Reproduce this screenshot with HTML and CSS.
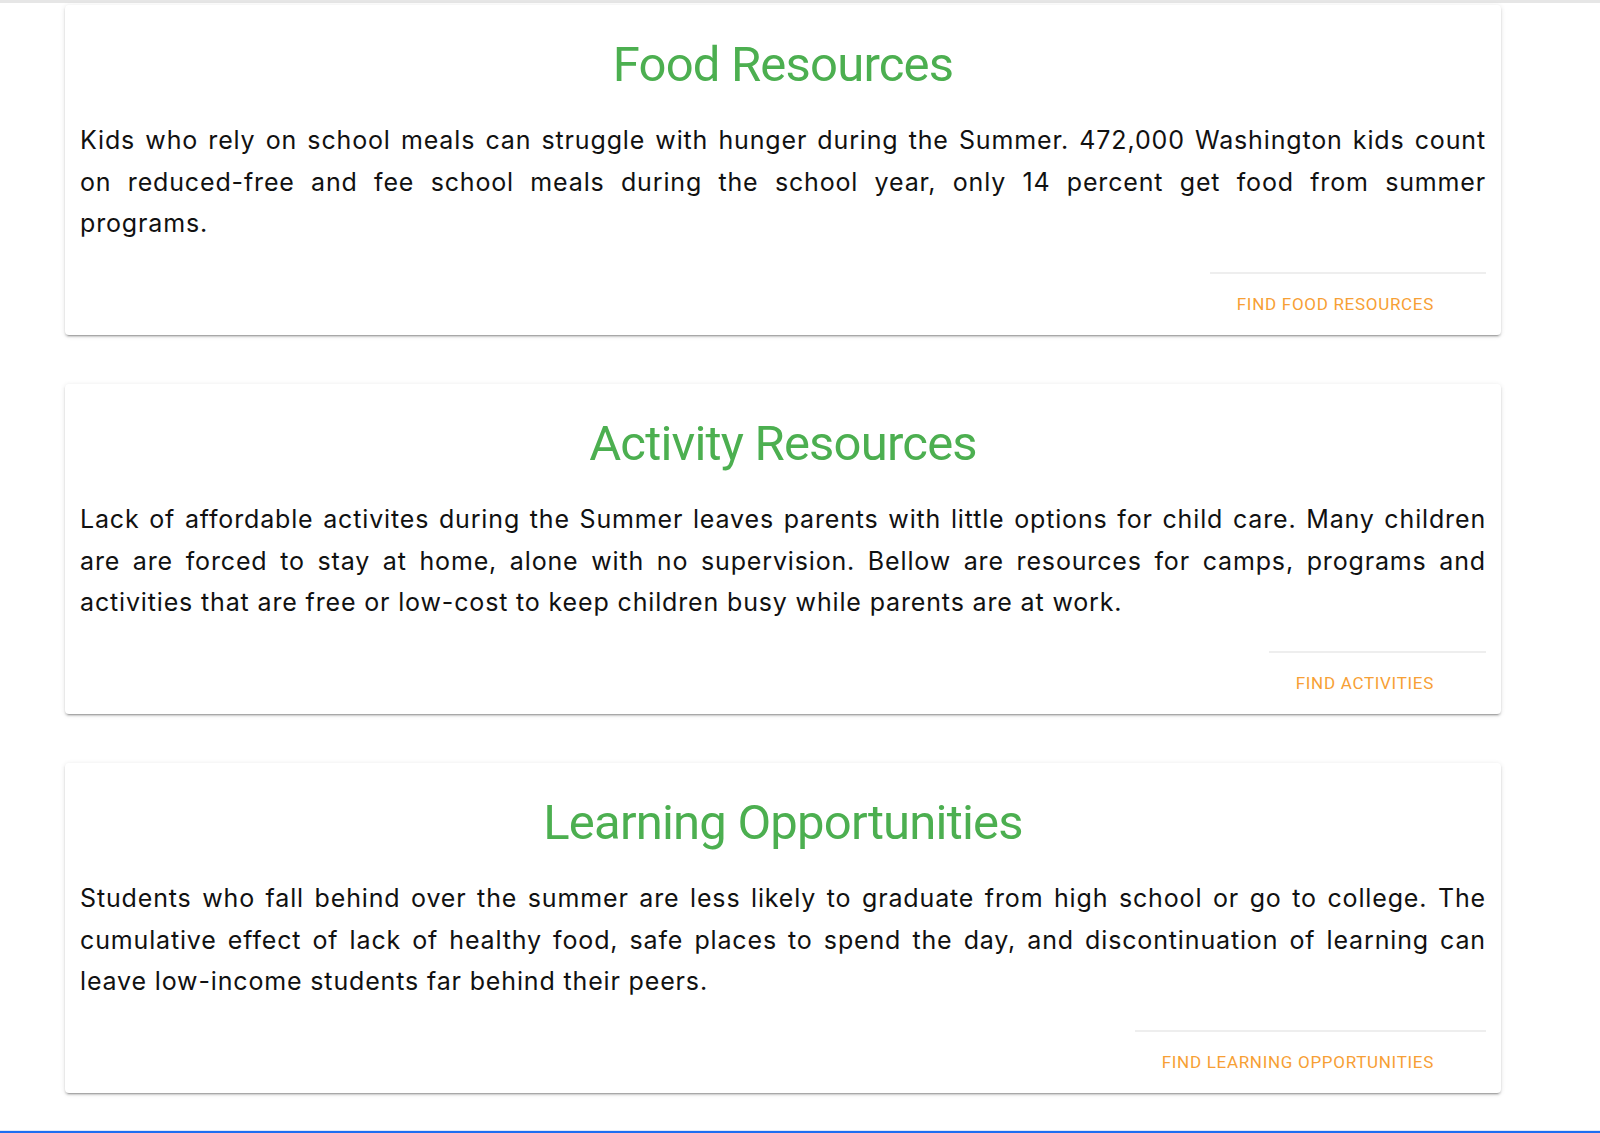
FILE: index.html
```html
<!DOCTYPE html>
<html lang="en">
<head>
<meta charset="utf-8">
<title>Summer Resources</title>
<link rel="stylesheet" href="styles.css">
</head>
<body>
<div class="page">
  <div class="topbar"></div>
  <main class="cards">
    <section class="card">
      <h2 class="card-title">Food Resources</h2>
      <p class="card-text">Kids who rely on school meals can struggle with hunger during the Summer. 472,000 Washington kids count on reduced-free and fee school meals during the school year, only 14 percent get food from summer programs.</p>
      <div class="actions">
        <div class="action"><a class="btn" href="#">Find Food Resources</a></div>
      </div>
    </section>
    <section class="card">
      <h2 class="card-title">Activity Resources</h2>
      <p class="card-text">Lack of affordable activites during the Summer leaves parents with little options for child care. Many children are are forced to stay at home, alone with no supervision. Bellow are resources for camps, programs and activities that are free or low-cost to keep children busy while parents are at work.</p>
      <div class="actions">
        <div class="action"><a class="btn" href="#">Find Activities</a></div>
      </div>
    </section>
    <section class="card">
      <h2 class="card-title">Learning Opportunities</h2>
      <p class="card-text">Students who fall behind over the summer are less likely to graduate from high school or go to college. The cumulative effect of lack of healthy food, safe places to spend the day, and discontinuation of learning can leave low-income students far behind their peers.</p>
      <div class="actions">
        <div class="action"><a class="btn" href="#">Find Learning Opportunities</a></div>
      </div>
    </section>
  </main>
  <div class="bottombar"></div>
</div>
</body>
</html>
```

FILE: styles.css
```css
html, body {
  margin: 0;
  padding: 0;
  background: #ffffff;
}

.page {
  height: 1133px;
  overflow: hidden;
  display: flex;
  flex-direction: column;
}

.topbar {
  height: 3px;
  background: #e6e6e6;
  flex: none;
}

.cards {
  display: flex;
  flex-direction: column;
  gap: 49px;
  padding: 2px 0 0 65px;
}

.card {
  width: 1436px;
  box-sizing: border-box;
  padding: 30px 15px 0 15px;
  background: #fff;
  border-radius: 4px;
  box-shadow: 0 3px 1px -2px rgba(0,0,0,0.2), 0 2px 2px 0 rgba(0,0,0,0.14), 0 1px 5px 0 rgba(0,0,0,0.12);
}

.card-title {
  margin: 0 0 25px 0;
  font-family: Roboto, "Liberation Sans", sans-serif;
  font-weight: 400;
  font-size: 49px;
  line-height: 60px;
  letter-spacing: -0.8px;
  color: #4caf50;
  text-align: center;
}

.card-text {
  margin: 0;
  font-family: Inter, "Noto Sans", sans-serif;
  font-size: 25px;
  line-height: 41.6px;
  color: #111;
  text-align: justify;
  letter-spacing: 0.85px;
  height: 125px;
}

.actions {
  display: flex;
  justify-content: flex-end;
  margin-top: 27px;
}

.action {
  border-top: 2px solid #eeeeee;
  padding: 18px 52px 19px 27px;
}

.btn {
  display: block;
  font-family: Roboto, "Liberation Sans", sans-serif;
  font-size: 17px;
  line-height: 24px;
  letter-spacing: 0.7px;
  text-transform: uppercase;
  color: #f7a035;
  text-decoration: none;
}

.bottombar {
  margin-top: auto;
  height: 2px;
  border-top: 1px solid #dfe8f8;
  background: #1d6ef2;
  flex: none;
}
```
